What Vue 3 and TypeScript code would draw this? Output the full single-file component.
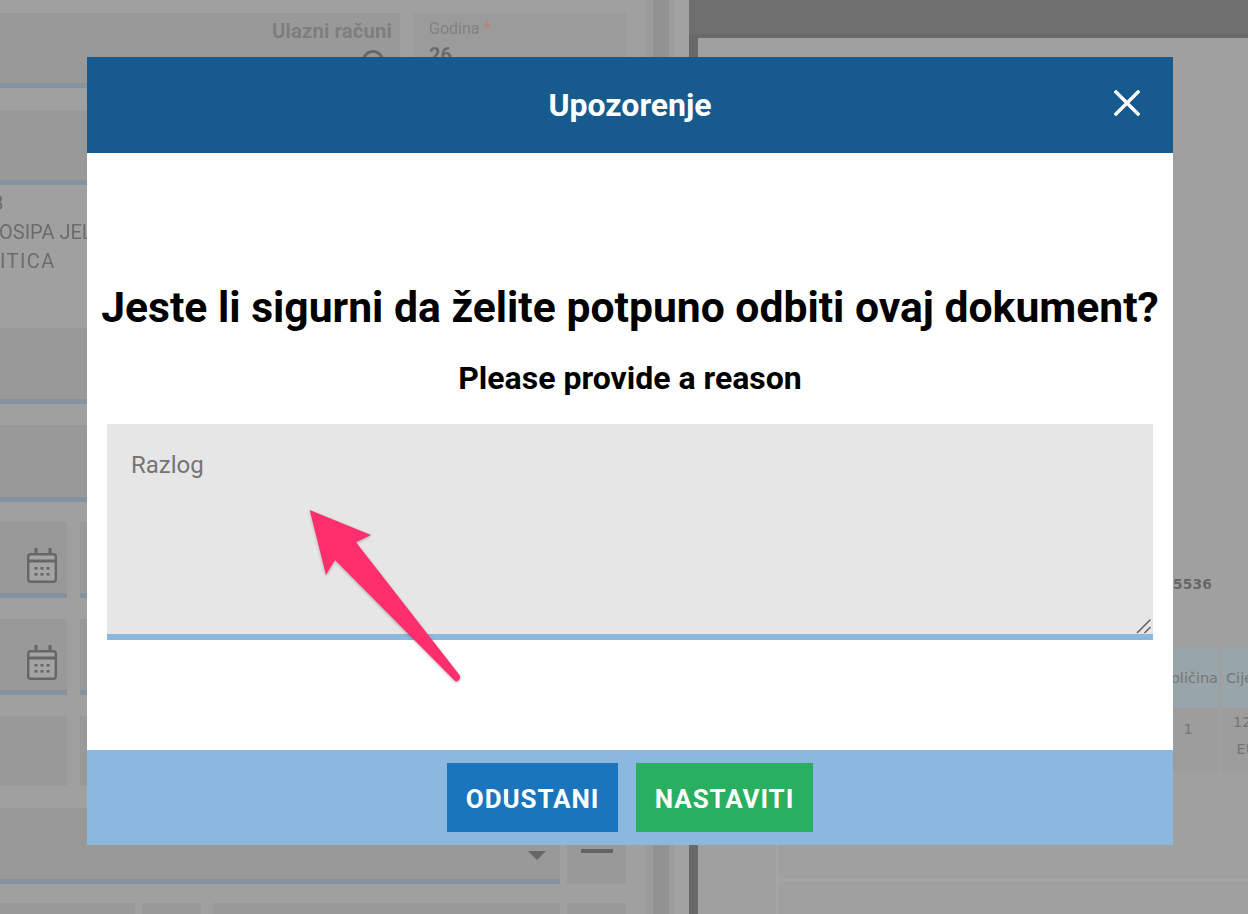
<script setup lang="ts">
const dots: [number, number][] = [
  [8, 18], [14, 18], [20, 18],
  [8, 24], [14, 24], [20, 24],
];
const calendarRows = [0, 1];
</script>

<template>
  <div class="page">
    <main class="left">
      <div class="row row-first">
        <div class="field field-doc">
          <span class="doc-title">Ulazni računi</span>
          <svg class="search" width="24" height="24" viewBox="0 0 24 24">
            <circle cx="12" cy="12" r="9.5" fill="none" stroke="#666" stroke-width="3" />
          </svg>
        </div>
        <div class="field field-year">
          <span class="year-label">Godina <em>*</em></span>
          <strong class="year-value">26</strong>
        </div>
      </div>
      <div class="row row-second"><div class="field wide"></div></div>
      <div class="address">
        <div class="addr-a">B</div>
        <div class="addr-b">JOSIPA JELAČIĆA</div>
        <div class="addr-c">ITICA</div>
      </div>
      <div class="row row-third"><div class="field wide"></div></div>
      <div class="row row-fourth"><div class="field wide"></div></div>
      <template v-for="n in calendarRows" :key="n">
        <div class="row" :class="n === 0 ? 'row-date-a' : 'row-date-b'">
          <div class="field date">
            <svg class="calendar" width="30" height="35" viewBox="0 0 30 35">
              <rect x="1.2" y="6.2" width="27.6" height="27.6" rx="2.5" fill="#a4a4a4" stroke="#666" stroke-width="2.4" />
              <rect x="1" y="11.5" width="28" height="3" fill="#666" />
              <rect x="7.5" y="0" width="3" height="6" fill="#666" />
              <rect x="21.5" y="0" width="3" height="6" fill="#666" />
              <rect v-for="d in dots" :key="d.join()" :x="d[0] - 0.5" :y="d[1] + 1" width="3" height="2.6" fill="#666" />
            </svg>
          </div>
          <div class="field rest"></div>
        </div>
      </template>
      <div class="row row-plain">
        <div class="field date plain"></div>
        <div class="field rest plain"></div>
      </div>
      <div class="row row-select">
        <div class="field select"><span class="caret"></span></div>
        <div class="field-btn"><span class="minus"></span></div>
      </div>
      <div class="row row-last">
        <div class="cell c1"></div>
        <div class="cell c2"></div>
        <div class="cell c3"></div>
        <div class="cell c4"></div>
      </div>
    </main>
    <div class="strip s1"></div>
    <div class="strip s2"></div>
    <div class="strip s3"></div>
    <div class="strip s4"></div>

    <section class="right">
      <div class="panel">
        <div class="doc-num">5536</div>
        <div class="table">
          <div class="thead">
            <div class="th qty">Količina</div>
            <div class="th price">Cijena</div>
          </div>
          <div class="tbody">
            <div class="td qty">1</div>
            <div class="td price">1234<br />EUR</div>
          </div>
        </div>
        <div class="lower"><div class="lower-box"></div></div>
      </div>
    </section>
  </div>

  <div class="modal" role="dialog">
    <header class="modal-head">
      <h2>Upozorenje</h2>
      <button class="close" aria-label="Zatvori">
        <svg width="26" height="26" viewBox="0 0 26 26">
          <path d="M2 2 L24 24 M24 2 L2 24" stroke="#fff" stroke-width="3.4" stroke-linecap="square" fill="none" />
        </svg>
      </button>
    </header>
    <div class="modal-body">
      <h1>Jeste li sigurni da želite potpuno odbiti ovaj dokument?</h1>
      <h3>Please provide a reason</h3>
      <div class="reason">
        <textarea placeholder="Razlog"></textarea>
        <svg class="grip" width="16" height="16" viewBox="0 0 16 16">
          <path d="M1 15 L14.5 1.5 M8.5 15 L14.5 9" stroke="#666" stroke-width="1.6" fill="none" />
        </svg>
      </div>
    </div>
    <footer class="modal-foot">
      <button class="btn cancel">ODUSTANI</button>
      <button class="btn go">NASTAVITI</button>
    </footer>
  </div>

  <svg class="arrow" width="170" height="190" viewBox="0 0 170 190">
    <path
      d="M9.7 10 L71 35 L56 42.3 L159.5 175 Q161 178.5 158.5 180.5 Q156.5 182.5 154.5 180.5 L35 60 L26 75 Z"
      fill="#ff2f6e"
    />
  </svg>
</template>

<style>
html, body {
  margin: 0;
  overflow: hidden;
  background: #a0a0a0;
}
</style>

<style scoped>
.page {
  width: 1248px;
  height: 914px;
  overflow: hidden;
  display: flex;
  background: #a0a0a0;
  font-family: Roboto, "Liberation Sans", sans-serif;
}
.left {
  width: 645px;
  flex: none;
  box-sizing: border-box;
  padding-top: 13px;
  display: flex;
  flex-direction: column;
  overflow: hidden;
}
.row {
  display: flex;
  gap: 13px;
  width: 626px;
  flex: none;
}
.field {
  box-sizing: border-box;
  background: #999;
  border-bottom: 5px solid #8592a0;
}
.wide { width: 100%; height: 100%; }
.row-first { height: 75px; }
.row-second { height: 75px; margin-top: 22px; }
.row-third { height: 76px; }
.row-fourth { height: 77px; margin-top: 21px; }
.row-date-a { height: 76px; margin-top: 20px; }
.row-date-b { height: 76px; margin-top: 21px; }
.row-plain { height: 70px; margin-top: 21px; }
.row-select { height: 76px; margin-top: 22px; gap: 7px; }
.row-last { height: 40px; margin-top: 19px; gap: 7px; }

.field-doc {
  width: 400px;
  display: flex;
  flex-direction: column;
  align-items: flex-end;
  padding-right: 8px;
  overflow: hidden;
}
.doc-title {
  font-size: 20.6px;
  font-weight: 700;
  line-height: 24px;
  margin-top: 6px;
  color: #7e7e7e;
  filter: blur(0.4px);
}
.search { margin: 6px 7px 0 0; }
.field-year {
  flex: 1;
  display: flex;
  flex-direction: column;
  padding-left: 16px;
  border-bottom: none;
  background: #9b9b9b;
}
.year-label {
  font-size: 16px;
  line-height: 18px;
  margin-top: 7px;
  color: #808080;
  filter: blur(0.4px);
}
.year-label em { font-style: normal; color: #b8806f; }
.year-value {
  font-size: 20px;
  line-height: 20px;
  margin-top: 7px;
  color: #6a6a6a;
  filter: blur(0.4px);
}
.address {
  height: 143px;
  flex: none;
  box-sizing: border-box;
  padding-top: 4px;
  font-size: 20px;
  line-height: 29px;
  color: #6c6c6c;
  white-space: nowrap;
  filter: blur(0.4px);
}
.addr-a { margin-left: -9px; }
.addr-b { margin-left: -12px; }
.addr-c { margin-left: 0; letter-spacing: 1.4px; }
.date {
  width: 67px;
  flex: none;
  height: 100%;
  position: relative;
  display: flex;
  justify-content: flex-end;
  align-items: flex-start;
  padding: 26px 10px 0 0;
}
.plain { border-bottom: none; }
.rest { flex: 1; height: 100%; }
.select {
  width: 560px;
  flex: none;
  height: 100%;
  display: flex;
  justify-content: flex-end;
  padding: 43px 14px 0 0;
}
.caret {
  width: 0;
  height: 0;
  border-left: 9px solid transparent;
  border-right: 9px solid transparent;
  border-top: 9px solid #666;
}
.field-btn {
  flex: 1;
  background: #999;
  display: flex;
  justify-content: center;
  padding-top: 41px;
  box-sizing: border-box;
}
.minus { width: 32px; height: 4px; background: #636363; }
.cell { background: #999; height: 100%; }
.c1 { width: 135px; }
.c2 { width: 59px; }
.c3 { width: 347px; margin-left: 5px; }
.c4 { flex: 1; }

.strip { flex: none; height: 100%; }
.s1 { width: 8px; background: #9b9b9b; }
.s2 { width: 16px; background: #929292; }
.s3 { width: 5px; background: #9d9d9d; }
.s4 { width: 15px; background: #a2a2a2; }

.right {
  flex: 1;
  min-width: 0;
  background: linear-gradient(#6f6f6f 0 34px, #696969 34px);
  padding: 38px 0 0 9px;
  box-sizing: border-box;
}
.panel {
  height: 100%;
  background: #a0a0a0;
  display: flex;
  flex-direction: column;
  align-items: flex-start;
  font-family: "DejaVu Sans", sans-serif;
  overflow: hidden;
  position: relative;
}
.doc-num {
  margin: 537px 0 0 475px;
  font-weight: 700;
  font-size: 14px;
  line-height: 18px;
  color: #666;
  filter: blur(0.3px);
}
.table {
  margin: 54px 0 0 442px;
  font-size: 14.5px;
  color: #757575;
  flex: none;
}
.thead, .tbody {
  display: flex;
  gap: 3px;
}
.thead { height: 61px; }
.tbody { height: 64px; }
.th {
  background: #98a5ab;
  display: flex;
  align-items: center;
  box-sizing: border-box;
}
.th.qty { width: 79px; justify-content: flex-end; padding-right: 1px; white-space: nowrap; }
.th.price { width: 59px; padding-left: 4px; }
.td {
  background: #9d9d9d;
  box-sizing: border-box;
}
.td.qty { width: 79px; text-align: center; padding: 12px 0 0 17px; line-height: 18px; }
.td.price { width: 59px; padding-top: 1px; line-height: 27px; text-align: center; }
.lower {
  align-self: stretch;
  flex: 1;
  margin: 0 0 0 78px;
  border-left: 2px solid #a5a5a5;
  padding-top: 107px;
}
.lower-box { border-top: 2px solid #a5a5a5; }

.modal {
  position: absolute;
  left: 87px;
  top: 57px;
  width: 1086px;
  height: 788px;
  background: #fff;
  display: flex;
  flex-direction: column;
  font-family: Roboto, "Liberation Sans", sans-serif;
}
.modal-head {
  height: 96px;
  flex: none;
  background: #165a8e;
  display: flex;
  align-items: center;
  justify-content: center;
  position: relative;
}
.modal-head h2 {
  margin: 0;
  color: #fff;
  font-size: 32px;
  font-weight: 700;
}
.close {
  position: absolute;
  right: 33px;
  top: 33px;
  padding: 0;
  width: 26px;
  height: 26px;
  background: none;
  border: none;
  display: block;
}
.close svg { display: block; }
.modal-body {
  flex: 1;
  display: flex;
  flex-direction: column;
  align-items: center;
  padding: 0 20px;
}
.modal-body h1 {
  margin: 126px -20px 0;
  font-size: 42.65px;
  line-height: 56px;
  font-weight: 700;
  color: #000;
  white-space: nowrap;
}
.modal-body h3 {
  margin: 22px 0 0;
  font-size: 32px;
  line-height: 42px;
  font-weight: 700;
  color: #000;
}
.reason {
  position: relative;
  align-self: stretch;
  margin-top: 25px;
  height: 216px;
}
.reason textarea {
  display: block;
  width: 100%;
  height: 100%;
  box-sizing: border-box;
  background: #e6e6e6;
  border: none;
  border-bottom: 6px solid #8cb8df;
  border-radius: 0;
  padding: 26px 24px;
  resize: none;
  outline: none;
  font-family: Roboto, "Liberation Sans", sans-serif;
  font-size: 24px;
  line-height: 30px;
}
.reason textarea::placeholder { color: #757575; opacity: 1; }
.grip {
  position: absolute;
  right: 1px;
  bottom: 6px;
}
.modal-foot {
  height: 95px;
  flex: none;
  background: #8cb8df;
  display: flex;
  justify-content: center;
  align-items: flex-start;
  gap: 18px;
  padding-top: 13px;
  box-sizing: border-box;
}
.btn {
  height: 69px;
  border: none;
  color: #fff;
  font-family: Roboto, "Liberation Sans", sans-serif;
  font-weight: 700;
  font-size: 26px;
  letter-spacing: 0.9px;
  padding: 2px 0 0;
}
.cancel { width: 171px; background: #1a75bd; }
.go { width: 177px; background: #29af60; }

.arrow {
  position: absolute;
  left: 300px;
  top: 500px;
  filter: drop-shadow(0 1px 1.5px rgba(0, 0, 0, 0.28));
  pointer-events: none;
}
</style>
